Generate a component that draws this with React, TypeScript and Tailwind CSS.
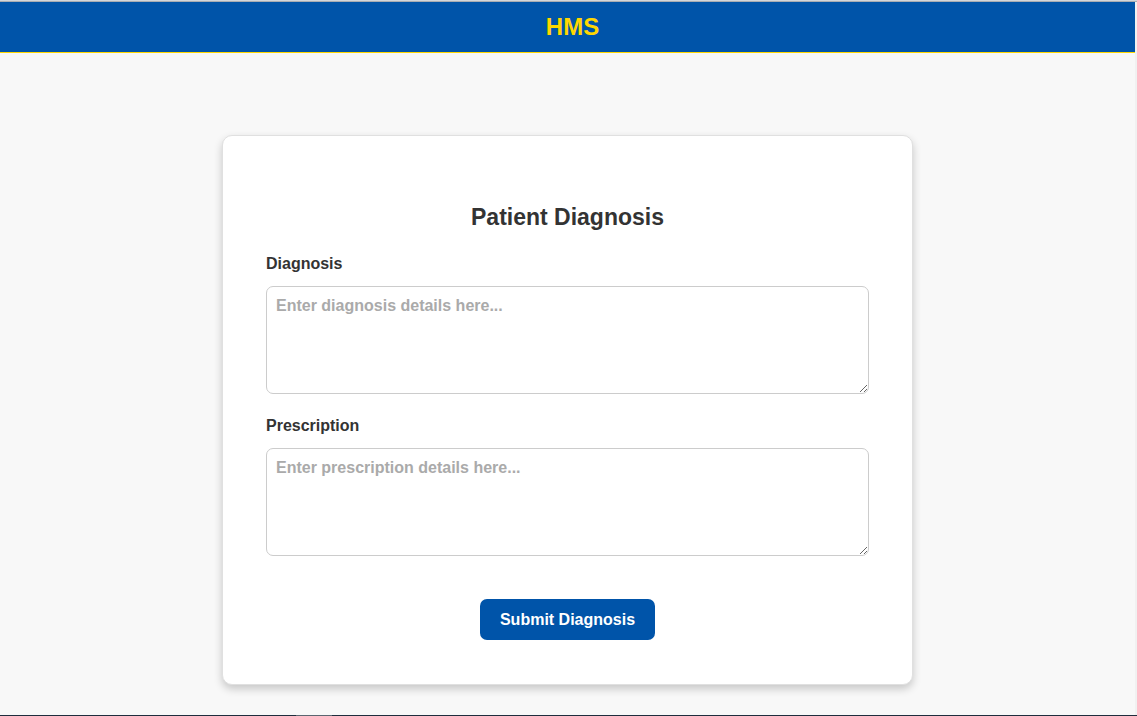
type FieldProps = { id: string; label: string; placeholder: string };

function Field({ id, label, placeholder }: FieldProps) {
  return (
    <div className="flex flex-col gap-3">
      <label htmlFor={id} className="text-base leading-5 font-bold text-[#333]">
        {label}
      </label>
      <textarea
        id={id}
        placeholder={placeholder}
        className="h-[108px] w-full resize-y rounded-[7px] border border-[#ccc] bg-white p-[9px] text-base leading-5 font-bold text-[#333] outline-none placeholder:text-[#aaa]"
      />
    </div>
  );
}

export default function App() {
  return (
    <div className="flex min-h-screen flex-col border-t border-[#d3d6da] bg-[#f8f8f8] font-['Liberation_Sans',Arial,sans-serif]">
      <div className="flex grow border-t border-[#a9adb3]">
        <div className="flex grow flex-col">
          <header className="border-b border-[#ffd700] bg-[#0054a9] py-[9px] pl-[10px] text-center">
            <h1 className="text-2xl font-bold text-[#ffd700]">HMS</h1>
          </header>
          <main className="flex grow justify-center px-4 pt-[82px] pb-[30px]">
            <form
              onSubmit={(event) => event.preventDefault()}
              className="flex w-full max-w-[691px] flex-col rounded-[10px] border border-[#e0e0e0] bg-white px-[43px] pt-[65px] pb-[43px] shadow-[0_4px_8px_rgba(0,0,0,0.2)]"
            >
              <h2 className="mb-[21px] text-center text-[23px] leading-8 font-bold text-[#333]">
                Patient Diagnosis
              </h2>
              <div className="flex flex-col gap-[22px]">
                <Field id="diagnosis" label="Diagnosis" placeholder="Enter diagnosis details here..." />
                <Field id="prescription" label="Prescription" placeholder="Enter prescription details here..." />
              </div>
              <button
                type="submit"
                className="mt-[43px] self-center rounded-[7px] bg-[#0054a9] px-5 py-[10px] text-base leading-[21px] font-bold text-white"
              >
                Submit Diagnosis
              </button>
            </form>
          </main>
        </div>
        <div className="w-[2px] bg-[#f1f1f1]" />
      </div>
      <div className="flex h-px bg-[#1f2d3d]">
        <div className="ml-[26%] w-9 bg-[#5b6670]" />
      </div>
    </div>
  );
}
